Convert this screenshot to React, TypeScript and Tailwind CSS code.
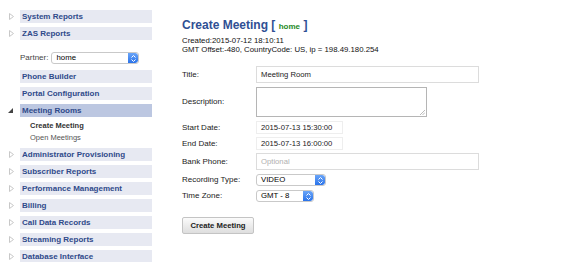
import React from "react";

const Tri = ({ open }: { open?: boolean }) =>
  open ? (
    <svg width="6" height="6" viewBox="0 0 6 6" className="shrink-0">
      <polygon points="5,0 5,5 0,5" fill="#444" />
    </svg>
  ) : (
    <svg width="5" height="7" viewBox="0 0 5 7" className="shrink-0">
      <polygon points="0.5,0.5 4.5,3.5 0.5,6.5" fill="none" stroke="#c8c8c8" strokeWidth="1" />
    </svg>
  );

function NavItem({ label, arrow = true, active = false, open = false }: { label: string; arrow?: boolean; active?: boolean; open?: boolean }) {
  return (
    <div className="flex items-center h-[13px]">
      <div className="w-[20px] flex justify-center pl-[2px]">{arrow && <Tri open={open} />}</div>
      <div
        className={`flex-1 h-[13px] flex items-center pl-[2px] text-[8px] font-bold text-[#2f4a8a] ${
          active ? "bg-[#bcc7e1]" : "bg-[#e7e9f2]"
        }`}
      >
        {label}
      </div>
    </div>
  );
}

function Stepper() {
  return (
    <div className="w-[10px] h-full bg-gradient-to-b from-[#6aa5f8] to-[#2a73ea] rounded-r-[3px] flex flex-col items-center justify-center gap-[1px]">
      <svg width="5" height="3" viewBox="0 0 5 3"><polyline points="0.5,2.5 2.5,0.5 4.5,2.5" fill="none" stroke="white" strokeWidth="1" /></svg>
      <svg width="5" height="3" viewBox="0 0 5 3"><polyline points="0.5,0.5 2.5,2.5 4.5,0.5" fill="none" stroke="white" strokeWidth="1" /></svg>
    </div>
  );
}

function Select({ value, w }: { value: string; w: string }) {
  return (
    <div className={`${w} h-[12px] flex border border-[#c9c9c9] rounded-[3px] bg-white overflow-hidden`}>
      <div className="flex-1 text-[7.8px] leading-[10px] text-black pl-[4px]">{value}</div>
      <Stepper />
    </div>
  );
}

function Row({ label, children, h, mt }: { label: string; children: React.ReactNode; h: string; mt: string }) {
  return (
    <div className={`flex ${mt}`}>
      <div className={`w-[74px] ${h} flex items-center text-[8px] text-[#222]`}>{label}</div>
      {children}
    </div>
  );
}

const inputCls = "border border-[#dcdcdc] bg-white text-[7.7px] pl-[4px] flex items-center text-[#222]";

export default function App() {
  return (
    <div className="w-[564px] h-[262px] bg-white flex overflow-hidden" style={{ fontFamily: '"Liberation Sans", Arial, sans-serif' }}>
      <aside className="w-[152px] shrink-0 pt-[10px] flex flex-col">
        <NavItem label="System Reports" />
        <div className="mt-[4px]"><NavItem label="ZAS Reports" /></div>
        <div className="mt-[6px] ml-[10px] h-px bg-[#eeeeee]" />
        <div className="mt-[6px] ml-[20px] flex items-center gap-[3px] h-[12px]">
          <span className="text-[8px] text-[#444]">Partner:</span>
          <Select value="home" w="w-[88px]" />
        </div>
        <div className="mt-[6px]"><NavItem label="Phone Builder" arrow={false} /></div>
        <div className="mt-[4px]"><NavItem label="Portal Configuration" arrow={false} /></div>
        <div className="mt-[4px]"><NavItem label="Meeting Rooms" active open /></div>
        <div className="ml-[30px] mt-[3px] text-[7.5px] font-bold text-[#333] leading-[12px]">Create Meeting</div>
        <div className="ml-[30px] text-[7.5px] text-[#555] leading-[12px]">Open Meetings</div>
        <div className="mt-[4px] flex flex-col gap-[4px]">
          <NavItem label="Administrator Provisioning" />
          <NavItem label="Subscriber Reports" />
          <NavItem label="Performance Management" />
          <NavItem label="Billing" />
          <NavItem label="Call Data Records" />
          <NavItem label="Streaming Reports" />
          <NavItem label="Database Interface" />
        </div>
      </aside>

      <main className="flex-1 pl-[30px] pt-[18px]">
        <h1 className="text-[12px] font-bold text-[#2f4f94] leading-[14px]">
          Create Meeting <span>[</span> <span className="text-[8px] text-[#1f8a1f]">home</span> <span>]</span>
        </h1>
        <div className="mt-[3px] text-[7.8px] leading-[8.5px] text-[#111]">Created:2015-07-12 18:10:11</div>
        <div className="text-[7.8px] leading-[8.5px] text-[#111]">GMT Offset:-480, CountryCode: US, ip = 198.49.180.254</div>

        <div className="mt-[12px]">
          <Row label="Title:" h="h-[17px]" mt="mt-0">
            <div className={`${inputCls} w-[223px] h-[17px]`}>Meeting Room</div>
          </Row>
          <Row label="Description:" h="h-[30px]" mt="mt-[4px]">
            <div className="w-[171px] h-[30px] border border-[#b5b5b5] bg-white relative">
              <svg width="5" height="5" viewBox="0 0 5 5" className="absolute right-[1px] bottom-[1px]">
                <line x1="0" y1="5" x2="5" y2="0" stroke="#aaa" strokeWidth="0.8" />
                <line x1="2.5" y1="5" x2="5" y2="2.5" stroke="#aaa" strokeWidth="0.8" />
              </svg>
            </div>
          </Row>
          <Row label="Start Date:" h="h-[13px]" mt="mt-[4px]">
            <div className={`${inputCls} w-[87px] h-[13px] border-[#eeeeee]`}>2015-07-13 15:30:00</div>
          </Row>
          <Row label="End Date:" h="h-[13px]" mt="mt-[3px]">
            <div className={`${inputCls} w-[87px] h-[13px] border-[#eeeeee]`}>2015-07-13 16:00:00</div>
          </Row>
          <Row label="Bank Phone:" h="h-[17px]" mt="mt-[3px]">
            <div className={`${inputCls} w-[223px] h-[17px] text-[#b0b0b0]`}>Optional</div>
          </Row>
          <Row label="Recording Type:" h="h-[12px]" mt="mt-[4px]">
            <Select value="VIDEO" w="w-[70px]" />
          </Row>
          <Row label="Time Zone:" h="h-[12px]" mt="mt-[4px]">
            <Select value="GMT - 8" w="w-[58px]" />
          </Row>
        </div>

        <button className="mt-[15px] w-[72px] h-[17px] border border-[#c4c4c4] rounded-[2px] bg-gradient-to-b from-[#fbfbfb] to-[#dedede] text-[7.7px] font-bold text-[#222]">
          Create Meeting
        </button>
      </main>
    </div>
  );
}
